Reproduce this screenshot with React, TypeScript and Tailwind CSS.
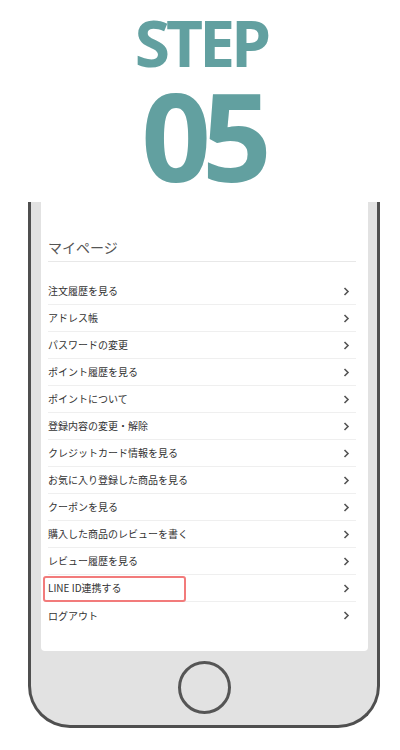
import React from 'react'

const items = [
  '注文履歴を見る',
  'アドレス帳',
  'パスワードの変更',
  'ポイント履歴を見る',
  'ポイントについて',
  '登録内容の変更・解除',
  'クレジットカード情報を見る',
  'お気に入り登録した商品を見る',
  'クーポンを見る',
  '購入した商品のレビューを書く',
  'レビュー履歴を見る',
  'LINE ID連携する',
  'ログアウト',
]

function Chevron() {
  return (
    <svg width="7" height="9" viewBox="0 0 7 9" className="shrink-0">
      <path d="M1.5 1l3.5 3.5-3.5 3.5" fill="none" stroke="#555" strokeWidth="1.6" />
    </svg>
  )
}

export default function App() {
  return (
    <div className="w-[400px] h-[750px] bg-white overflow-hidden font-['Noto_Sans_CJK_JP',sans-serif]">
      {/* Title */}
      <div className="h-[202px] pt-[12px] flex flex-col items-center text-[#62a0a0] font-['Open_Sans',sans-serif] font-bold">
        <div className="text-[64px] leading-[62px] tracking-[-4px] pl-[2px]">STEP</div>
        <div className="text-[122px] leading-none tracking-[-9px] pl-[4px]">05</div>
      </div>

      {/* Phone */}
      <div className="ml-[28px] w-[352px] h-[526px] border-x-[3px] border-b-[3px] border-[#4f4f4f] rounded-b-[42px] bg-[#e2e2e2] pl-[10px] pr-[9px] flex flex-col">
        <div className="bg-white rounded-b-[4px] pt-[35px] pb-[22px] pl-[7px] pr-[12px]">
          <div className="border-b border-[#e8e8e8] pb-[4px]">
            <h2 className="text-[14px] leading-[20px] text-[#555] font-normal">マイページ</h2>
          </div>
          <ul className="mt-[16px]">
            {items.map((label, i) => (
              <li
                key={label}
                className={`relative h-[27px] flex items-center justify-between pr-[6px] ${
                  i < items.length - 1 ? 'border-b border-[#efefef]' : ''
                }`}
              >
                <span className="text-[10px] leading-none text-[#333]">{label}</span>
                <Chevron />
                {label === 'LINE ID連携する' && (
                  <span className="absolute left-[-5px] top-[1px] w-[143px] h-[26px] border-2 border-[#f27b7b] rounded-[3px]" />
                )}
              </li>
            ))}
          </ul>
        </div>
        <div className="flex-1 flex items-start justify-center pt-[10px]">
          <div className="w-[53px] h-[53px] rounded-full border-[3px] border-[#555]" />
        </div>
      </div>
    </div>
  )
}
